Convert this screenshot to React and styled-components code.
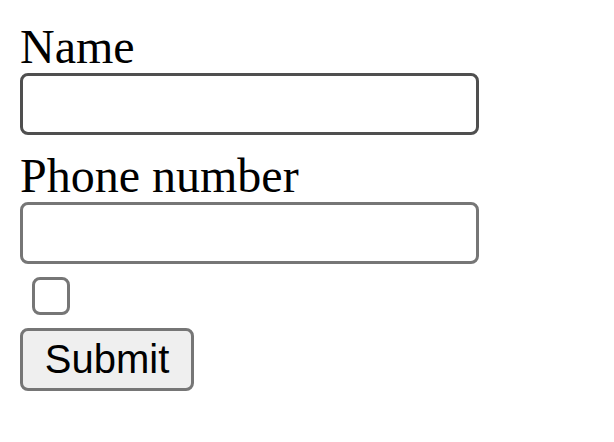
import styled, { createGlobalStyle } from "styled-components";

const GlobalStyle = createGlobalStyle`
  html, body {
    margin: 0;
    background: #ffffff;
  }
`;

const Form = styled.form`
  padding: 20px;
  display: flex;
  flex-direction: column;
  align-items: flex-start;
  font-family: "Liberation Serif", "Times New Roman", serif;
`;

const Label = styled.label`
  display: block;
  font-size: 48px;
  line-height: 53px;
  color: #000000;
  margin-top: ${(p) => (p.$first ? "0" : "14px")};
`;

const TextInput = styled.input`
  box-sizing: border-box;
  width: 459px;
  height: 62px;
  margin: 0;
  border: 3px solid ${(p) => (p.$dark ? "#4f4f4f" : "#767676")};
  border-radius: 8px;
  background: #ffffff;
  font-size: 32px;
  padding: 0 6px;
  outline: none;
`;

const Checkbox = styled.span`
  display: block;
  box-sizing: border-box;
  width: 38px;
  height: 38px;
  margin: 13px 0 0 12px;
  border: 3px solid #767676;
  border-radius: 8px;
  background: #ffffff;
`;

const Button = styled.button`
  box-sizing: border-box;
  margin-top: 13px;
  width: 174px;
  height: 63px;
  padding: 0;
  border: 3px solid #767676;
  border-radius: 8px;
  background: #efefef;
  color: #000000;
  font-family: "Liberation Sans", Arial, sans-serif;
  font-size: 40px;
`;

export default function App() {
  return (
    <>
      <GlobalStyle />
      <Form onSubmit={(e) => e.preventDefault()}>
        <Label $first htmlFor="name">Name</Label>
        <TextInput id="name" type="text" $dark />
        <Label htmlFor="phone">Phone number</Label>
        <TextInput id="phone" type="tel" />
        <Checkbox role="checkbox" aria-checked="false" />
        <Button type="submit">Submit</Button>
      </Form>
    </>
  );
}
